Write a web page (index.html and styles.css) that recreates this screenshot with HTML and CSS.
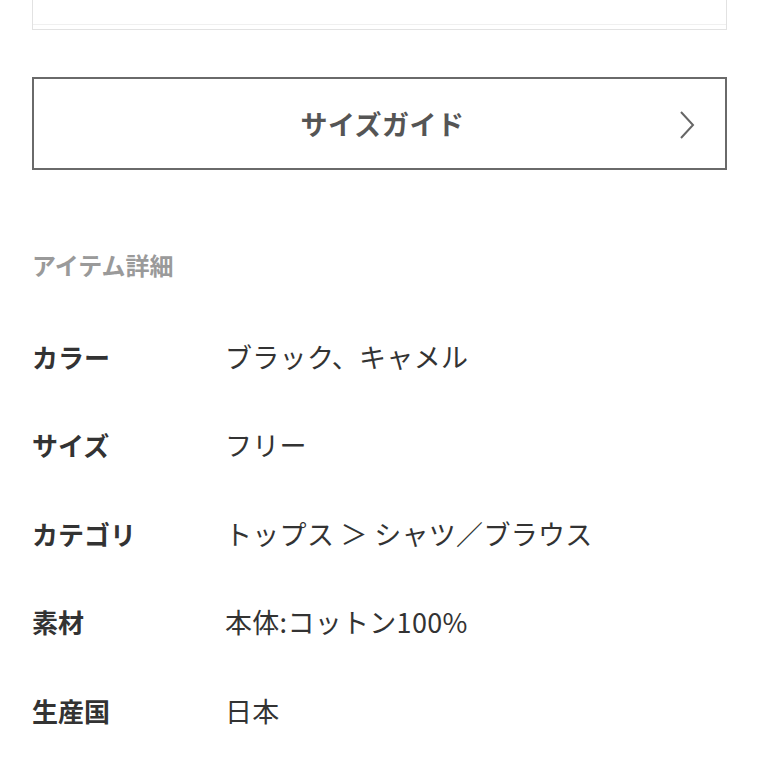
FILE: index.html
```html
<!DOCTYPE html>
<html lang="ja">
<head>
<meta charset="utf-8">
<link rel="stylesheet" href="styles.css">
</head>
<body>
<div class="page">
  <div class="topbox"></div>
  <button class="guide">
    <span class="guide-text">サイズガイド</span>
    <svg class="chev" width="16" height="28" viewBox="0 0 16 28"><path d="M2 1 L14 14 L2 27" fill="none" stroke="#666" stroke-width="2"/></svg>
  </button>
  <h2 class="section">アイテム詳細</h2>
  <dl class="details">
    <div class="row"><dt>カラー</dt><dd>ブラック、キャメル</dd></div>
    <div class="row"><dt>サイズ</dt><dd>フリー</dd></div>
    <div class="row"><dt>カテゴリ</dt><dd>トップス ＞ シャツ／ブラウス</dd></div>
    <div class="row"><dt>素材</dt><dd>本体:コットン100%</dd></div>
    <div class="row"><dt>生産国</dt><dd>日本</dd></div>
  </dl>
</div>
</body>
</html>
```

FILE: styles.css
```css
* { box-sizing: border-box; }
html, body { margin: 0; padding: 0; background: #fff; }
body {
  font-family: "Noto Sans CJK JP", "Noto Sans", sans-serif;
  color: #333;
  overflow: hidden;
}
.page {
  padding: 0 33px 0 32px;
}
.topbox {
  height: 30px;
  margin-top: 0;
  border: 1px solid #e2e2e2;
  border-top: none;
  box-shadow: inset 0 -4px 0 #fff, inset 0 -5px 0 #f0f0f0;
}
.guide {
  display: flex;
  align-items: center;
  justify-content: center;
  position: relative;
  width: 100%;
  height: 93px;
  margin-top: 47px;
  border: 2px solid #6a6a6a;
  background: #fff;
  font-family: inherit;
  padding: 0;
}
.guide-text {
  font-size: 27px;
  font-weight: 700;
  color: #555;
  letter-spacing: 0.5px;
  margin-left: 6px;
}
.chev {
  position: absolute;
  right: 30px;
  top: 32px;
}
.section {
  margin: 78px 0 0;
  font-size: 24px;
  font-weight: 700;
  color: #9a9a9a;
  line-height: 34px;
}
.details {
  margin: 30px 0 0;
}
.row {
  display: flex;
  align-items: center;
  height: 88.5px;
}
dt {
  width: 193px;
  font-size: 26px;
  font-weight: 700;
  color: #333;
}
dd {
  margin: 0;
  font-size: 27px;
  color: #333;
  letter-spacing: 0.3px;
}
```
